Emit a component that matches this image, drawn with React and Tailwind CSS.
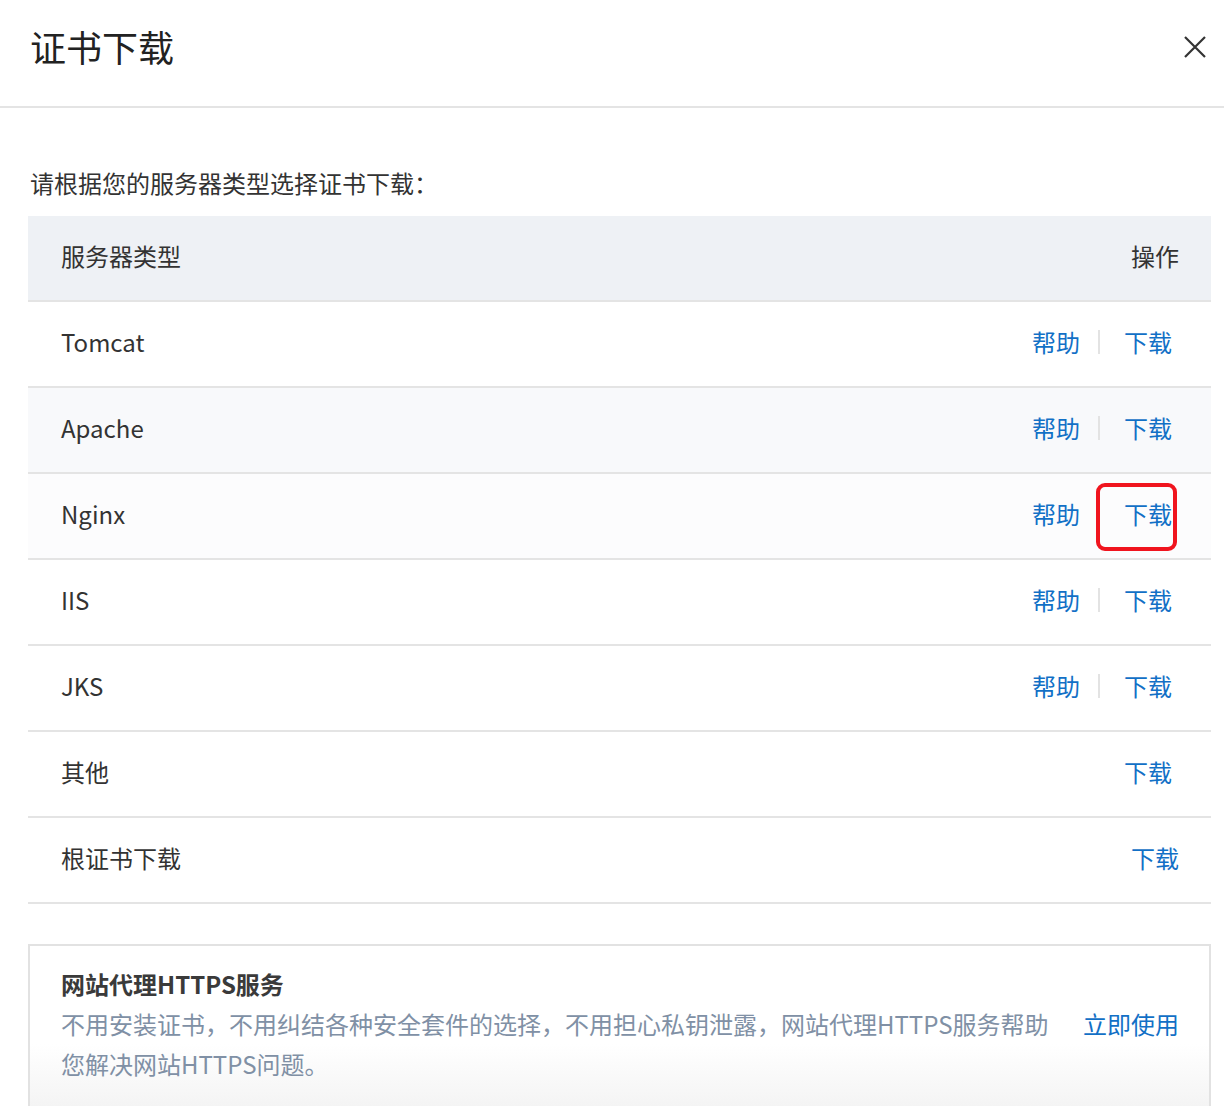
import React from "react";

const rows = [
  { name: "Tomcat", help: true },
  { name: "Apache", help: true, bg: "bg-[#f8f9fb]" },
  { name: "Nginx", help: true, bg: "bg-[#fcfcfd]", marked: true },
  { name: "IIS", help: true },
  { name: "JKS", help: true },
  { name: "其他", help: false },
  { name: "根证书下载", help: false, root: true },
];

function Row({ row }) {
  return (
    <div
      className={`flex h-[86px] items-center justify-between border-b-2 border-[#e4e4e4] pb-[4px] pl-[33px] ${
        row.bg || "bg-white"
      } ${row.root ? "pr-[32px]" : "pr-[39px]"}`}
    >
      <span className="text-[24px] leading-[34px] text-[#333]">{row.name}</span>
      <div className="flex items-center text-[24px] leading-[34px] text-[#1270c6]">
        {row.help && (
          <>
            <span>帮助</span>
            <span className="ml-[18px] mr-[24px] h-[24px] w-[2px] bg-[#e3e3e3]" />
          </>
        )}
        <span className="relative">
          下载
          {row.marked && (
            <span className="absolute -left-[28px] -top-[14px] h-[68px] w-[81px] rounded-[9px] border-4 border-[#f0141e]" />
          )}
        </span>
      </div>
    </div>
  );
}

export default function App() {
  return (
    <div
      className="h-[1106px] w-[1224px] overflow-hidden bg-white text-[#333]"
      style={{ fontFamily: '"Noto Sans CJK SC", "Noto Sans", sans-serif' }}
    >
      <div className="flex h-[108px] items-start justify-between border-b-2 border-[#e4e4e4] pl-[30px] pr-[18px] pt-[25px]">
        <h1 className="text-[36px] leading-[42px] text-[#222]">证书下载</h1>
        <svg className="mt-[11px]" width="22" height="22" viewBox="0 0 22 22">
          <path d="M1 1 L21 21 M21 1 L1 21" stroke="#333" strokeWidth="2.2" fill="none" />
        </svg>
      </div>

      <div className="pl-[28px] pr-[13px]">
        <p className="pl-[2px] pt-[59px] text-[24px] leading-[32px]">请根据您的服务器类型选择证书下载：</p>

        <div className="mt-[17px]">
          <div className="flex h-[86px] items-center justify-between border-b-2 border-[#e4e4e4] bg-[#eef1f5] pb-[4px] pl-[33px] pr-[32px] text-[24px] leading-[34px] text-[#333]">
            <span>服务器类型</span>
            <span>操作</span>
          </div>
          {rows.map((r) => (
            <Row key={r.name} row={r} />
          ))}
        </div>

        <div className="mt-[40px] h-[200px] border-2 border-[#e2e2e2] bg-gradient-to-b from-white from-50% to-[#eeeeee] pl-[31px] pr-[30px] pt-[22px]">
          <h2 className="text-[24px] font-bold leading-[32px] text-[#3a3a3a]">网站代理HTTPS服务</h2>
          <div className="mt-[4px] flex items-start justify-between">
            <p className="w-[1010px] text-[24px] leading-[40px] text-[#8090a5]">
              不用安装证书，不用纠结各种安全套件的选择，不用担心私钥泄露，网站代理HTTPS服务帮助
              <br />
              您解决网站HTTPS问题。
            </p>
            <span className="text-[24px] leading-[40px] text-[#1270c6]">立即使用</span>
          </div>
        </div>
      </div>
    </div>
  );
}
